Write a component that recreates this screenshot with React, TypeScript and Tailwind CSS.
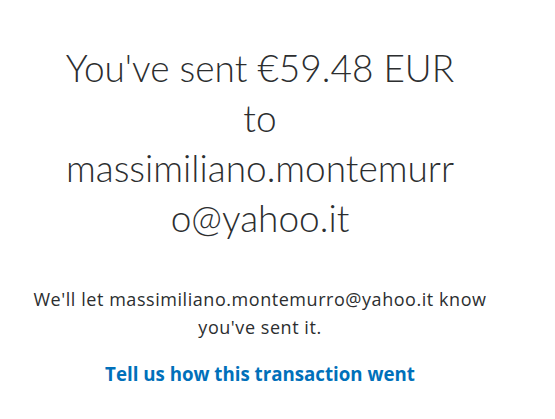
export default function App() {
  return (
    <div className="min-h-screen bg-white">
      <div className="w-[500px] ml-[10px] pt-[43px] text-center">
        <h1 className="px-[51px] text-[37px] leading-[50px] font-light text-[#2c2e2f] break-words font-['Lato','Liberation_Sans',sans-serif]">
          You've sent €59.48 EUR to massimiliano.montemurro@yahoo.it
        </h1>
        <p className="mt-[42px] text-[18px] leading-[28px] tracking-[0.55px] text-[#2c2e2f] font-['Open_Sans','Liberation_Sans',sans-serif]">
          We'll let massimiliano.montemurro@yahoo.it know you've sent it.
        </p>
        <a href="#" className="inline-block mt-[19px] text-[18.7px] font-bold text-[#0070ba] font-['Open_Sans','Liberation_Sans',sans-serif]">
          Tell us how this transaction went
        </a>
      </div>
    </div>
  )
}
